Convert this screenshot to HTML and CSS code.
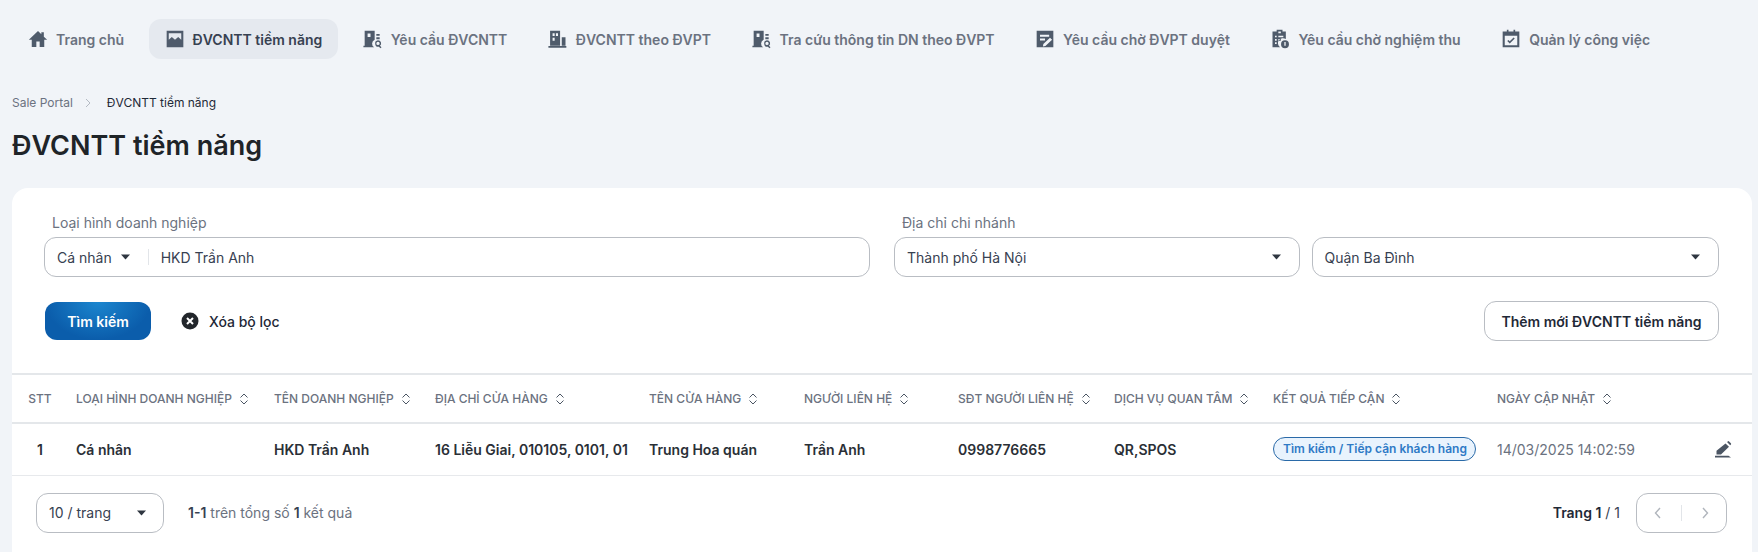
FILE: index.html
```html
<!DOCTYPE html>
<html lang="vi">
<head>
<meta charset="utf-8">
<title>ĐVCNTT tiềm năng</title>
<link rel="stylesheet" href="styles.css">
</head>
<body>
<nav class="nav">
  <a class="nav-item"><svg class="nav-icon" viewBox="0 0 24 24"><path d="M10 21.500v-6.500h4v6.500h5.500V13h3.500L19 9.200V4h-3v2.400L12 2.500 1 13h3.500v8.500z"/></svg>Trang chủ</a>
  <a class="nav-item active"><svg class="nav-icon" viewBox="0 0 24 24"><path fill-rule="evenodd" d="M2 2h20v20H2zM4.500 5v8l3.700-3.500 3.800 3.500 3.800-3.500 3.700 3.500V5z"/></svg>ĐVCNTT tiềm năng</a>
  <a class="nav-item"><svg class="nav-icon" viewBox="0 0 24 24"><path fill-rule="evenodd" d="M2 2h12v11a5 5 0 0 0-.5 9H.5v-2H2zM5.500 5.500v4h3.500v-4z"/><path d="M16 6h4v2.200h-4zM16 10h4v2.200h-4z"/><path fill-rule="evenodd" d="M18 13.500a3.800 3.800 0 0 1 2.400 6.700l1.800 1.800-1.200 1.200-2-2A3.800 3.800 0 1 1 18 13.500zm0 1.800a2 2 0 1 0 0 4 2 2 0 0 0 0-4z"/></svg>Yêu cầu ĐVCNTT</a>
  <a class="nav-item"><svg class="nav-icon" viewBox="0 0 24 24"><path fill-rule="evenodd" d="M2.500 2h12v18h-12zM5.500 5v3.500h2.500V5zM9.500 5v3.500h2.500V5zM5.500 10.500V14h2.500v-3.500z"/><path d="M16.500 10H21v10h-4.500zM.5 20.500h21.500v2H.5z"/></svg>ĐVCNTT theo ĐVPT</a>
  <a class="nav-item"><svg class="nav-icon" viewBox="0 0 24 24"><path fill-rule="evenodd" d="M2 2h12v11a5 5 0 0 0-.5 9H.5v-2H2zM5.500 5.500v4h3.500v-4z"/><path d="M16 6h4v2.200h-4zM16 10h4v2.200h-4z"/><path fill-rule="evenodd" d="M18 13.500a3.800 3.800 0 0 1 2.400 6.700l1.800 1.800-1.200 1.200-2-2A3.800 3.800 0 1 1 18 13.500zm0 1.800a2 2 0 1 0 0 4 2 2 0 0 0 0-4z"/></svg>Tra cứu thông tin DN theo ĐVPT</a>
  <a class="nav-item"><svg class="nav-icon" viewBox="0 0 24 24"><path fill-rule="evenodd" d="M2 2h20v20H2zM6 7v2.200h11V7zM6 11.500v2.200h6v-2.200zM18 10.500l-8 7.500-.5 3 3-.5 8-7.500z"/></svg>Yêu cầu chờ ĐVPT duyệt</a>
  <a class="nav-item"><svg class="nav-icon" viewBox="0 0 24 24"><path fill-rule="evenodd" d="M8 1h7v2h4v9.100A6 6 0 0 0 12.100 22H3V3h5zM10 3v2h3V3zM6 8v2h2V8zM10 8v2h6V8zM6 12v2h2v-2zM10 12v2h3v-2zM6 16v2h2v-2z"/><path fill-rule="evenodd" d="M18 13.500a4.750 4.750 0 1 1 0 9.500 4.750 4.750 0 0 1 0-9.500zM17.200 15.500v4.500h1.600v-4.500z"/></svg>Yêu cầu chờ nghiệm thu</a>
  <a class="nav-item"><svg class="nav-icon" viewBox="0 0 24 24"><path fill-rule="evenodd" d="M7 1h2v2h6V1h2v2h5v19H2V3h5zM4.500 8v11.500h15V8z"/><path d="M10.500 17.500l-3-3 1.400-1.400 1.600 1.600 4.600-4.600 1.400 1.400z"/></svg>Quản lý công việc</a>
</nav>

<div class="crumbs">
  <span class="crumb-root">Sale Portal</span>
  <svg class="crumb-sep" viewBox="0 0 10 10"><path d="M3 1l4 4-4 4"/></svg>
  <span class="crumb-current">ĐVCNTT tiềm năng</span>
</div>
<h1 class="title">ĐVCNTT tiềm năng</h1>

<main class="card">
  <section class="filters">
    <div class="field field-wide">
      <label class="label">Loại hình doanh nghiệp</label>
      <div class="control">
        <span class="value">Cá nhân</span>
        <svg class="caret caret-inline" viewBox="0 0 10 6"><path d="M.5.500h9L5 5.500z"/></svg>
        <span class="divider"></span>
        <span class="value">HKD Trần Anh</span>
      </div>
    </div>
    <div class="field field-select field-city">
      <label class="label">Địa chỉ chi nhánh</label>
      <div class="control control-select">
        <span class="value">Thành phố Hà Nội</span>
        <svg class="caret" viewBox="0 0 10 6"><path d="M.5.500h9L5 5.500z"/></svg>
      </div>
    </div>
    <div class="field field-select">
      <div class="control control-select">
        <span class="value">Quận Ba Đình</span>
        <svg class="caret" viewBox="0 0 10 6"><path d="M.5.500h9L5 5.500z"/></svg>
      </div>
    </div>
  </section>

  <section class="actions">
    <button class="btn-primary">Tìm kiếm</button>
    <button class="btn-clear">
      <svg class="clear-icon" viewBox="0 0 18 18"><circle cx="9" cy="9" r="8.500"/><path d="M6 6l6 6M12 6l-6 6"/></svg>
      Xóa bộ lọc
    </button>
    <button class="btn-add">Thêm mới ĐVCNTT tiềm năng</button>
  </section>

  <table class="table">
    <colgroup>
      <col class="c1"><col class="c2"><col class="c3"><col class="c4"><col class="c5"><col class="c6"><col class="c7"><col class="c8"><col class="c9"><col class="c10"><col class="c11">
    </colgroup>
    <thead>
      <tr>
        <th class="stt">STT</th>
        <th>LOẠI HÌNH DOANH NGHIỆP<svg class="sort" viewBox="0 0 10 14"><path d="M1.500 5.500L5 2l3.500 3.500M1.500 8.500L5 12l3.500-3.500"/></svg></th>
        <th>TÊN DOANH NGHIỆP<svg class="sort" viewBox="0 0 10 14"><path d="M1.500 5.500L5 2l3.500 3.500M1.500 8.500L5 12l3.500-3.500"/></svg></th>
        <th>ĐỊA CHỈ CỬA HÀNG<svg class="sort" viewBox="0 0 10 14"><path d="M1.500 5.500L5 2l3.500 3.500M1.500 8.500L5 12l3.500-3.500"/></svg></th>
        <th>TÊN CỬA HÀNG<svg class="sort" viewBox="0 0 10 14"><path d="M1.500 5.500L5 2l3.500 3.500M1.500 8.500L5 12l3.500-3.500"/></svg></th>
        <th>NGƯỜI LIÊN HỆ<svg class="sort" viewBox="0 0 10 14"><path d="M1.500 5.500L5 2l3.500 3.500M1.500 8.500L5 12l3.500-3.500"/></svg></th>
        <th>SĐT NGƯỜI LIÊN HỆ<svg class="sort" viewBox="0 0 10 14"><path d="M1.500 5.500L5 2l3.500 3.500M1.500 8.500L5 12l3.500-3.500"/></svg></th>
        <th>DỊCH VỤ QUAN TÂM<svg class="sort" viewBox="0 0 10 14"><path d="M1.500 5.500L5 2l3.500 3.500M1.500 8.500L5 12l3.500-3.500"/></svg></th>
        <th>KẾT QUẢ TIẾP CẬN<svg class="sort" viewBox="0 0 10 14"><path d="M1.500 5.500L5 2l3.500 3.500M1.500 8.500L5 12l3.500-3.500"/></svg></th>
        <th>NGÀY CẬP NHẬT<svg class="sort" viewBox="0 0 10 14"><path d="M1.500 5.500L5 2l3.500 3.500M1.500 8.500L5 12l3.500-3.500"/></svg></th>
        <th></th>
      </tr>
    </thead>
    <tbody>
      <tr>
        <td class="stt">1</td>
        <td>Cá nhân</td>
        <td>HKD Trần Anh</td>
        <td>16 Liễu Giai, 010105, 0101, 01</td>
        <td>Trung Hoa quán</td>
        <td>Trần Anh</td>
        <td>0998776665</td>
        <td>QR,SPOS</td>
        <td><span class="tag">Tìm kiếm / Tiếp cận khách hàng</span></td>
        <td class="date">14/03/2025 14:02:59</td>
        <td class="edit"><svg class="edit-icon" viewBox="0 0 18 18"><path d="M11.500 3.500l3.500 3.300-8 7.700H2.500v-3.800zM13 2l.8-.6a1 1 0 0 1 1.300 0l1.800 1.800a1 1 0 0 1 0 1.300l-.7.800zM1 15.800h13.500l2.500 1.700H1z"/></svg></td>
      </tr>
    </tbody>
  </table>

  <footer class="pager">
    <div class="page-size">
      <span class="value">10 / trang</span>
      <svg class="caret" viewBox="0 0 10 6"><path d="M.5.500h9L5 5.500z"/></svg>
    </div>
    <div class="page-count"><b>1-1</b> trên tổng số <b>1</b> kết quả</div>
    <div class="page-label"><b>Trang 1</b> / 1</div>
    <div class="page-buttons">
      <svg class="page-arrow" viewBox="0 0 10 14"><path d="M7 2L2.500 7 7 12"/></svg>
      <span class="page-divider"></span>
      <svg class="page-arrow" viewBox="0 0 10 14"><path d="M3 2l4.500 5L3 12"/></svg>
    </div>
  </footer>
</main>
</body>
</html>
```
FILE: styles.css
```css
* { box-sizing: border-box; }
html, body { height: 100%; }
body {
  margin: 0;
  padding: 0 6px 0 12px;
  background: #f1f4f8;
  font-family: Inter, "Noto Sans", sans-serif;
  font-size: 14px;
  color: #374151;
  overflow: hidden;
  display: flex;
  flex-direction: column;
}

/* top navigation */
.nav { display: flex; gap: 8.5px; padding-top: 19px; }
.nav-item {
  display: flex;
  align-items: center;
  gap: 8px;
  height: 40px;
  padding: 0 16px;
  border-radius: 12px;
  font-weight: 600;
  color: #6b7280;
  white-space: nowrap;
}
.nav-item.active { background: #e5e9ef; color: #374151; }
.nav-icon { width: 20px; height: 20px; fill: #4f5b6b; flex: none; }

/* breadcrumb and title */
.crumbs {
  display: flex;
  align-items: center;
  height: 18px;
  margin-top: 35px;
  font-size: 12px;
  line-height: 18px;
}
.crumb-root { color: #6b7280; }
.crumb-sep { width: 10px; height: 10px; margin: 0 14px 0 10px; fill: none; stroke: #b4bac3; stroke-width: 1; }
.crumb-current { color: #1f2937; }
.title {
  margin: 10px 0 0;
  height: 48px;
  font-size: 27px;
  line-height: 48px;
  font-weight: 600;
  color: #1f2428;
}

/* card */
.card {
  flex: 1;
  margin-top: 18px;
  background: #fff;
  border-radius: 16px 16px 0 0;
}
.filters {
  display: flex;
  align-items: flex-end;
  gap: 12px;
  padding: 25px 33px 0 32px;
}
.field { display: flex; flex-direction: column; gap: 4px; }
.field-wide { width: 826px; margin-right: 12px; }
.field-select { flex: 1; }
.field-city { flex: none; width: 405.5px; }
.label { padding-left: 8px; line-height: 20px; color: #6b7280; }
.control {
  display: flex;
  align-items: center;
  height: 40px;
  padding: 0 12px;
  border: 1px solid #b9bdc3;
  border-radius: 12px;
}
.control-select { justify-content: space-between; padding-right: 17px; }
.value { color: #374151; white-space: nowrap; }
.caret { width: 11px; height: 6px; fill: #2f3640; flex: none; }
.caret-inline { margin-left: 8px; }
.divider { width: 1px; height: 16px; margin: 0 12px 0 17px; background: #e2e5e9; }

/* action row */
.actions {
  display: flex;
  align-items: center;
  padding: 24px 33px 0 33px;
}
button { font: inherit; cursor: pointer; }
.btn-primary {
  width: 106px;
  height: 38px;
  border: 0;
  border-radius: 12px;
  background: radial-gradient(ellipse at 50% 0, #1b86cf 0, #0b5dab 70%);
  color: #fff;
  font-weight: 600;
}
.btn-clear {
  display: flex;
  align-items: center;
  gap: 10px;
  margin-left: 30px;
  padding: 0;
  border: 0;
  background: none;
  color: #1f2937;
  font-weight: 500;
}
.clear-icon { width: 18px; height: 18px; }
.clear-icon circle { fill: #22262b; }
.clear-icon path { stroke: #fff; stroke-width: 2; fill: none; }
.btn-add {
  margin-left: auto;
  width: 235px;
  height: 40px;
  border: 1px solid #b9bdc3;
  border-radius: 12px;
  background: #fff;
  color: #1f2937;
  font-weight: 600;
}

/* table */
.table {
  width: 100%;
  margin-top: 32px;
  border-collapse: collapse;
  table-layout: fixed;
}
.c1 { width: 52px; }
.c2 { width: 198px; }
.c3 { width: 161px; }
.c4 { width: 214px; }
.c5 { width: 155px; }
.c6 { width: 154px; }
.c7 { width: 156px; }
.c8 { width: 159px; }
.c9 { width: 224px; }
.c10 { width: 211px; }
.table th {
  height: 49px;
  padding: 0 12px;
  border-top: 2px solid #e4e7ea;
  border-bottom: 2px solid #e4e7ea;
  text-align: left;
  font-size: 12px;
  font-weight: 500;
  color: #6b7280;
  white-space: nowrap;
}
.sort {
  width: 10px;
  height: 14px;
  margin-left: 7px;
  vertical-align: -3px;
  fill: none;
  stroke: #4b5563;
  stroke-width: 1;
}
.table td {
  height: 52px;
  padding: 0 12px;
  border-bottom: 1px solid #e7e9ec;
  font-weight: 600;
  color: #2a2f36;
  white-space: nowrap;
  overflow: hidden;
}
.table .stt { padding: 0 0 0 4px; text-align: center; }
.tag {
  display: inline-block;
  height: 24px;
  padding: 0 8px 0 9px;
  border: 1px solid #2a6aa8;
  border-radius: 12px;
  background: #e9f3fd;
  color: #2f7ac6;
  font-size: 12px;
  line-height: 22px;
  white-space: nowrap;
}
.table .date { font-weight: 400; color: #6b7280; }
.table .edit { padding: 2px 20px 0 0; text-align: right; }
.edit-icon { width: 18px; height: 18px; fill: #4b5563; }

/* pagination */
.pager {
  display: flex;
  align-items: center;
  padding: 17px 25px 0 24px;
}
.page-size {
  display: flex;
  align-items: center;
  justify-content: space-between;
  width: 128px;
  height: 40px;
  padding: 0 16px 0 12px;
  border: 1px solid #b9bdc3;
  border-radius: 12px;
}
.page-count { margin-left: 24px; color: #6b7280; }
.page-count b { font-weight: 600; color: #374151; }
.page-label { margin-left: auto; color: #374151; }
.page-label b { font-weight: 600; color: #1f2937; }
.page-buttons {
  display: flex;
  align-items: center;
  justify-content: space-between;
  width: 91px;
  height: 40px;
  margin-left: 16px;
  padding: 0 16px;
  border: 1px solid #b9bdc3;
  border-radius: 12px;
}
.page-arrow { width: 10px; height: 14px; fill: none; stroke: #b0b5bc; stroke-width: 1.4; }
.page-divider { width: 1px; height: 16px; background: #e2e5e9; }
```
